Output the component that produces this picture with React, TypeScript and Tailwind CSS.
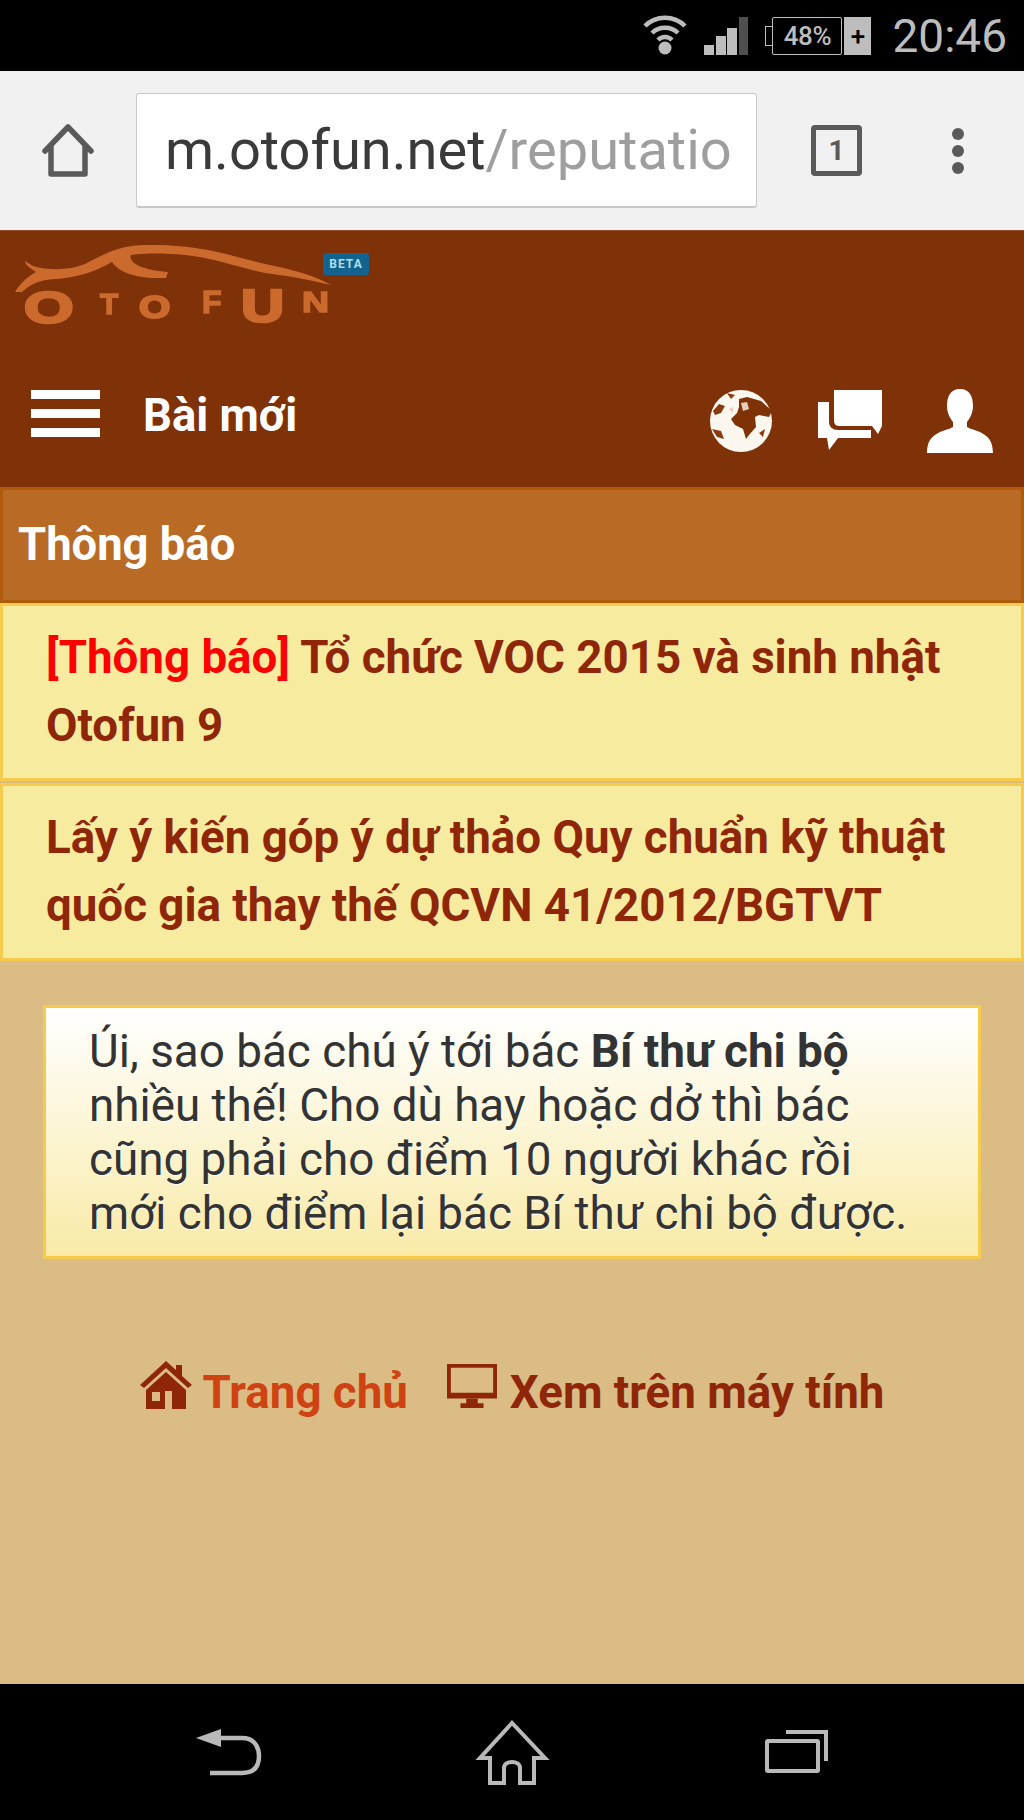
function StatusBar() {
  return (
    <div className="h-[71px] bg-black flex items-center justify-end pr-[17px] text-[#bdbdbd]">
      <svg width="44" height="42" viewBox="0 0 44 42" className="mb-[1px]">
        <g fill="none" stroke="#bdbdbd" strokeWidth="4.5">
          <path d="M2 12 C13 1 31 1 42 12" />
          <path d="M9 19 C16 12 28 12 35 19" />
          <path d="M15 26 C19 22 25 22 29 26" />
        </g>
        <circle cx="22" cy="34" r="6.5" fill="#bdbdbd" />
      </svg>
      <svg width="44" height="38" viewBox="0 0 44 38" className="ml-[17px]">
        <rect x="0" y="28" width="10" height="10" fill="#bdbdbd" />
        <rect x="12" y="19" width="10" height="19" fill="#bdbdbd" />
        <rect x="23" y="11" width="10" height="27" fill="#bdbdbd" />
        <rect x="35" y="0" width="9" height="38" fill="#4f4f4f" />
      </svg>
      <div className="ml-[24px] relative flex items-center h-[38px] w-[70px] border-[1.5px] border-[#bdbdbd] rounded-[2px] justify-center">
        <span className="absolute left-[-8px] top-[8px] w-[7px] h-[20px] border-[1.5px] border-r-0 border-[#bdbdbd]" />
        <span className="text-[26px] leading-none font-medium tracking-[-0.5px]">48%</span>
      </div>
      <div className="ml-[2px] w-[27px] h-[38px] bg-[#bdbdbd] text-black flex items-center justify-center text-[26px] font-medium leading-none">
        +
      </div>
      <span className="ml-[21px] text-[46px] leading-none">20:46</span>
    </div>
  );
}

function BrowserBar() {
  return (
    <div className="h-[159px] bg-[#f1f1f1] flex items-center">
      <div className="w-[136px] flex justify-center pt-[1px]">
        <svg width="52" height="54" viewBox="0 0 52 54">
          <path
            d="M3 27 L26 3 L49 27 M9 22 V50 H43 V22"
            fill="none"
            stroke="#5a5a5a"
            strokeWidth="5.5"
            strokeLinejoin="round"
            strokeLinecap="round"
          />
        </svg>
      </div>
      <div className="w-[621px] h-[115px] bg-white rounded-[3px] border border-[#c8c8c8] border-b-2 flex items-center pl-[28px] overflow-hidden whitespace-nowrap text-[56px] leading-none">
        <span className="text-[#3a3a3a]">m.otofun.net</span>
        <span className="text-[#9e9e9e]">/reputatio</span>
      </div>
      <div className="ml-[54px] w-[51px] h-[51px] border-[5px] border-[#5a5a5a] rounded-[4px] flex items-center justify-center text-[#5a5a5a] text-[28px] font-bold leading-none">
        1
      </div>
      <div className="ml-[90px] flex flex-col gap-[5px]">
        <span className="w-[12px] h-[12px] rounded-full bg-[#5a5a5a]" />
        <span className="w-[12px] h-[12px] rounded-full bg-[#5a5a5a]" />
        <span className="w-[12px] h-[12px] rounded-full bg-[#5a5a5a]" />
      </div>
    </div>
  );
}

function Logo() {
  // viewBox uses page coordinates so the shape lines up with the screenshot
  const letter = "'Liberation Sans', sans-serif";
  return (
    <div className="relative w-[360px] h-[82px]">
      <svg width="325" height="100" viewBox="14 245 325 100" className="absolute left-0 top-0 blur-[0.5px]">
        <path
          d="M25 261 L33 266 C50 271 70 270 85 264 C100 256 115 248 132 246 C150 244 175 245 195 248 C225 252 245 260 270 265 C295 270 315 276 331 285 C310 280 290 276 265 273 C240 268 215 258 185 255 C165 253 145 253 131 255 C128 262 140 270 168 272 L166 278 C140 279 120 274 112 262 C95 272 75 278 55 279 C40 280 32 283 22 292 L15 292 C20 283 30 275 36 272 C30 268 25 265 25 261 Z"
          fill="#cc6a2e"
        />
        <g fontFamily={letter} fontWeight="700" fill="#cc6a2e" stroke="#cc6a2e">
          <text transform="translate(24 323) scale(1.45 1)" fontSize="44" strokeWidth="2.5">O</text>
          <text x="100" y="314" fontSize="30" strokeWidth="1.5">T</text>
          <text transform="translate(139 318) scale(1.3 1)" fontSize="31" strokeWidth="2">O</text>
          <text x="202" y="313" fontSize="32" strokeWidth="1.5">F</text>
          <text transform="translate(241 322) scale(1.3 1)" fontSize="46" strokeWidth="2.5">U</text>
          <text transform="translate(302 312) scale(1.25 1)" fontSize="30" strokeWidth="1.5">N</text>
        </g>
      </svg>
      <div className="absolute left-[309px] top-[8px] w-[46px] h-[22px] rounded-[3px] bg-[#14628f] text-[#a8e0ec] text-[12px] font-bold tracking-[1px] flex items-center justify-center leading-none">
        BETA
      </div>
    </div>
  );
}

function Globe() {
  return (
    <svg width="64" height="64" viewBox="0 0 64 64" className="blur-[0.6px]">
      <circle cx="32" cy="32" r="31" fill="#fbf6ee" />
      <path
        d="M30 10 L38 8 L52 12 L63 22 L60 28 L50 26 L46 28 L47 38 L40 46 L37 50 L34 40 L26 36 L22 30 L28 24 L30 18 Z"
        fill="#7f3206"
      />
      <path
        d="M4 22 L10 15 L16 17 L12 24 L6 26 Z M3 40 L12 42 L15 50 L8 48 Z M18 4 L26 6 L22 10 Z M50 44 L56 40 L54 48 Z"
        fill="#8b3a10"
      />
      <path d="M32 14 L38 13 L40 20 L34 22 Z M20 20 L24 18 L24 24 Z" fill="#e9cdbb" />
    </svg>
  );
}

function SiteHeader() {
  return (
    <div className="h-[257px] bg-[#7f3207] border-t border-[#8f4a20] flex flex-col">
      <div className="pt-[14px] pl-[14px]">
        <Logo />
      </div>
      <div className="mt-[62px] flex items-start pl-[31px]">
        <div className="mt-[1px] w-[69px] flex flex-col gap-[10px] blur-[0.5px]">
          <span className="h-[9px] bg-white" />
          <span className="h-[9px] bg-white" />
          <span className="h-[9px] bg-white" />
        </div>
        <span className="ml-[43px] mt-[4px] text-white font-bold text-[45.4px] leading-none">Bài mới</span>
        <div className="ml-auto flex items-center pr-[31px]">
          <Globe />
          <svg width="64" height="62" viewBox="0 0 64 62" className="ml-[45px] blur-[0.5px]">
            <path d="M16 0 H64 V36 L60 44 L54 36 H21 C17 36 16 33 16 30 Z" fill="#fff" />
            <path d="M0 12 H11 V32 C11 37 15 40 20 40 H53 V48 H20 L11 60 L9 48 H0 Z" fill="#fff" />
          </svg>
          <svg width="66" height="64" viewBox="0 0 66 64" className="ml-[45px] blur-[0.5px]">
            <path
              d="M33 0 C43 0 46 8 46 17 C46 24 43 29 40 33 V38 C48 43 66 42 66 64 H0 C0 42 18 43 26 38 V33 C23 29 20 24 20 17 C20 8 23 0 33 0 Z"
              fill="#fff"
            />
          </svg>
        </div>
      </div>
    </div>
  );
}

function Notice({ children }: { children: React.ReactNode }) {
  return (
    <div className="bg-[#f6eb9f] border-[3px] border-[#f6cb4b] pl-[43px] pr-[30px] pt-[17.5px] pb-[18.5px] text-[45.7px] leading-[68px] font-bold text-[#8f2608]">
      {children}
    </div>
  );
}

function Links() {
  return (
    <div className="mt-[101px] flex items-center justify-center text-[45.7px] font-bold leading-none">
      <svg width="52" height="50" viewBox="0 0 52 50" className="mb-[16px] blur-[0.5px]">
        <path d="M0 25 L26 1 L36 10 V5 L42 5 V16 L52 25 L48 28 L26 8 L4 28 Z" fill="#8f2608" />
        <path fillRule="evenodd" d="M6 30 L26 12 L46 30 V49 H32 V31 H25 V49 H6 Z M12 32 V41 H20 V32 Z" fill="#8f2608" />
      </svg>
      <span className="ml-[11px] text-[#cf4313]">Trang chủ</span>
      <svg width="50" height="46" viewBox="0 0 52 46" className="ml-[39px] mb-[15px] blur-[0.5px]">
        <path fillRule="evenodd" d="M0 0 H52 V36 H0 Z M4 4 V30 H48 V4 Z" fill="#8f2608" />
        <path d="M20 36 H32 V41 H38 V46 H14 V41 H20 Z" fill="#8f2608" />
      </svg>
      <span className="ml-[13px] text-[#8f2608]">Xem trên máy tính</span>
    </div>
  );
}

function NavBar() {
  return (
    <div className="h-[136px] bg-black">
      <svg width="700" height="110" viewBox="0 0 700 110" className="ml-[170px]">
        <path d="M51 45 V63 L26 54 Z" fill="#b9b9b9" />
        <path d="M51 54 H72 C85 54 89 64 89 72 C89 84 83 89 72 89 H40" fill="none" stroke="#b9b9b9" strokeWidth="4.5" />
        <path
          d="M320 99 V74 H310 L342 39 L375 74 H364 V99 H350 V84 C350 76 334 76 334 84 V99 Z"
          fill="none"
          stroke="#b9b9b9"
          strokeWidth="4"
        />
        <rect x="597" y="57" width="51" height="30" fill="none" stroke="#b9b9b9" strokeWidth="4" rx="1" />
        <path d="M616 48 H656 V77" fill="none" stroke="#b9b9b9" strokeWidth="4" />
      </svg>
    </div>
  );
}

export default function App() {
  return (
    <div className="w-[1024px] h-[1820px] flex flex-col overflow-hidden bg-[#dbbc85] font-['Roboto',sans-serif]">
      <StatusBar />
      <BrowserBar />
      <SiteHeader />
      <div className="h-[116px] bg-[#b96a24] border-[3px] border-[#ae5c0c] flex items-center pl-[15px] text-white font-bold text-[45.4px] leading-none">
        Thông báo
      </div>
      <Notice>
        <span className="text-[#ff0000]">[Thông báo]</span> Tổ chức VOC 2015 và sinh nhật Otofun 9
      </Notice>
      <div className="h-[2px] bg-[#dbbc85]" />
      <Notice>Lấy ý kiến góp ý dự thảo Quy chuẩn kỹ thuật quốc gia thay thế QCVN 41/2012/BGTVT</Notice>
      <div className="mt-[44px] mx-[43px] border-[3px] border-[#f6cb4b] bg-gradient-to-b from-white to-[#f9eaa6] pl-[43px] pr-[60px] pt-[17px] pb-[15px] text-[45.8px] leading-[54px] text-[#333333] [text-shadow:0_1px_1px_#ffffff]">
        Úi, sao bác chú ý tới bác <b>Bí thư chi bộ</b> nhiều thế! Cho dù hay hoặc dở thì bác cũng phải cho điểm 10 người khác rồi mới cho điểm lại bác Bí thư chi bộ được.
      </div>
      <Links />
      <div className="mt-auto">
        <NavBar />
      </div>
    </div>
  );
}
